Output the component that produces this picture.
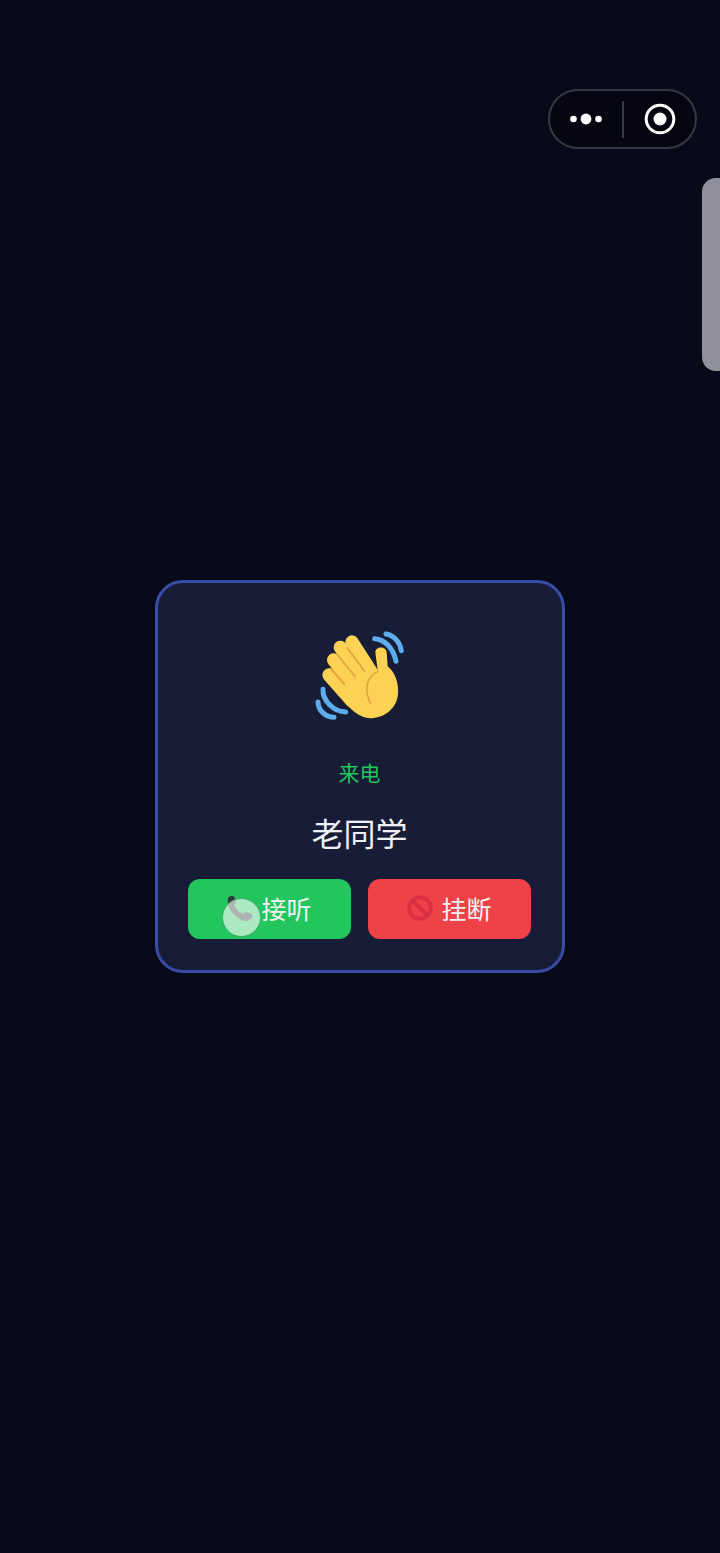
<div class="page">
	<div class="capsule">
		<div class="seg">
			<svg width="34" height="14" viewBox="0 0 34 14">
				<circle cx="4.500" cy="7" r="3.300" fill="#fff" />
				<circle cx="17" cy="7" r="5.400" fill="#fff" />
				<circle cx="29.500" cy="7" r="3.300" fill="#fff" />
			</svg>
		</div>
		<div class="divider"></div>
		<div class="seg">
			<svg width="34" height="34" viewBox="0 0 34 34">
				<circle cx="18" cy="17" r="13.800" fill="none" stroke="#fff" stroke-width="3" />
				<circle cx="18" cy="17" r="6.500" fill="#fff" />
			</svg>
		</div>
	</div>

	<div class="handle"></div>

	<div class="card">
		<svg width="120" height="110" viewBox="0 0 360 330">
			<g fill="none" stroke="#5dadec" stroke-width="15" stroke-linecap="round">
				<path d="M224 56c30 2 56 28 64 68" />
				<path d="M258 42c24 4 42 24 46 50" />
				<path d="M69 208c-2 32 30 66 68 68" />
				<path d="M54 246c0 24 22 46 48 46" />
			</g>
			<g fill="none" stroke="#fcd254" stroke-width="40" stroke-linecap="round">
				<path d="M156 66l64 100" />
				<path d="M121 82l74 110" />
				<path d="M101 120l78 96" />
				<path d="M87 165l69 78" />
			</g>
			<path fill="#fcd254" d="M226 97c0-18 32-20 34 0l3 42c22 18 34 50 31 84-4 44-42 72-84 72-32-2-58-26-84-58L150 150l84 8z" />
			<g fill="none" stroke="#e8a03f" stroke-width="5" stroke-linecap="round">
				<path d="M142 84l52 70" />
				<path d="M112 104l54 66" />
				<path d="M92 146l42 48" />
				<path d="M234 155c-30 10-46 50-22 96" />
			</g>
		</svg>

		<div class="status">来电</div>
		<div class="name">老同学</div>

		<div class="actions">
			<div class="btn accept">
				<svg width="26" height="26" viewBox="0 0 26 26">
					<path fill="#31373d" d="M1.500 2.500c2-2.500 5-2.500 6 0l1.500 4c.5 1.500-1 2.500-2 3.500 1.500 3.500 5 7 9 9 1-1 2.500-2.500 4-2l3.500 1.500c2.500 1 2.500 3.500.5 5.500-3 3-8 2.500-13-1C6 19.500 2 14 1 9c-.4-2.500-.5-4.500.5-6.500z" />
				</svg>
				<span>接听</span>
				<div class="touch"></div>
			</div>
			<div class="btn hangup">
				<svg width="26" height="26" viewBox="0 0 26 26">
					<circle cx="13" cy="13" r="10.800" fill="none" stroke="#d92f45" stroke-width="4" />
					<path d="M5.500 5.500l15 15" stroke="#d92f45" stroke-width="4" />
				</svg>
				<span>挂断</span>
			</div>
		</div>
	</div>
</div>

<style>
	:global(body) {
		background: #070a18;
	}
	.page {
		position: relative;
		display: flex;
		justify-content: center;
		align-items: center;
		height: 1553px;
		overflow: hidden;
		background: #070a18;
		font-family: 'Noto Sans CJK SC', 'Noto Sans', sans-serif;
	}
	.capsule {
		position: absolute;
		top: 89px;
		left: 548px;
		display: flex;
		align-items: center;
		box-sizing: border-box;
		width: 149px;
		height: 60px;
		border: 2px solid #363943;
		border-radius: 30px;
		background: #05060f;
	}
	.seg {
		flex: 1;
		display: flex;
		justify-content: center;
		align-items: center;
	}
	.divider {
		width: 2px;
		height: 37px;
		background: #363943;
	}
	.handle {
		position: absolute;
		top: 178px;
		right: 0;
		width: 18px;
		height: 193px;
		border-radius: 14px 0 0 14px;
		background: #8f9099;
	}
	.card {
		display: flex;
		flex-direction: column;
		align-items: center;
		box-sizing: border-box;
		width: 410px;
		height: 393px;
		padding: 37px 31px 30px 30px;
		border: 3px solid #3a4ca8;
		border-radius: 28px;
		background: #171c37;
	}
	.status {
		margin-top: 27px;
		color: #22c55e;
		font-size: 21px;
		line-height: 30px;
	}
	.name {
		margin-top: 23px;
		color: #f0f1f5;
		font-size: 32px;
		line-height: 44px;
	}
	.actions {
		display: flex;
		gap: 17px;
		width: 100%;
		margin-top: 25px;
	}
	.btn {
		position: relative;
		flex: 1;
		display: flex;
		justify-content: center;
		align-items: center;
		gap: 8px;
		box-sizing: border-box;
		height: 60px;
		padding-bottom: 2px;
		border-radius: 12px;
		color: #f2f2f2;
		font-size: 25px;
	}
	.accept {
		background: #22c55e;
	}
	.hangup {
		background: #ef4248;
	}
	.touch {
		position: absolute;
		top: 19px;
		left: 34px;
		box-sizing: border-box;
		width: 39px;
		height: 39px;
		border: 1px solid #3fae6c;
		border-radius: 50%;
		background: rgba(255, 255, 255, 0.62);
	}
</style>
